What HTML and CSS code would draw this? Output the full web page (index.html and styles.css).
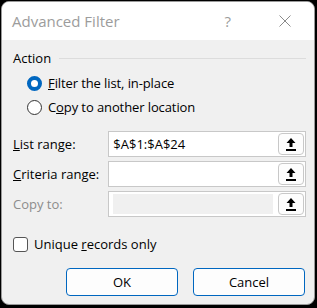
FILE: index.html
```html
<!DOCTYPE html>
<html lang="en">
<head>
    <meta charset="UTF-8">
    <title>Advanced Filter</title>
    <link rel="stylesheet" href="styles.css">
</head>
<body>
    <div class="dialog">
        <div class="titleBar">
            <span class="title">Advanced Filter</span>
            <span class="help">?</span>
            <span class="close">
                <svg width="12" height="12" viewBox="0 0 12 12">
                    <path d="M0.5 0.5L11.5 11.5M11.5 0.5L0.5 11.5" stroke="#8a8a8a" stroke-width="1" fill="none"/>
                </svg>
            </span>
        </div>
        <div class="content">
            <div class="groupHead">
                <span>Action</span>
                <div class="groupLine"></div>
            </div>
            <div class="radioList">
                <div class="radioRow">
                    <span class="radio checked"></span>
                    <span><u>F</u>ilter the list, in-place</span>
                </div>
                <div class="radioRow">
                    <span class="radio"></span>
                    <span>C<u>o</u>py to another location</span>
                </div>
            </div>
            <div class="fields">
                <div class="fieldRow">
                    <span class="fieldLabel"><u>L</u>ist range:</span>
                    <div class="rangeBox">
                        <span class="rangeText">$A$1:$A$24</span>
                        <span class="pickBtn"><svg width="10" height="13" viewBox="0 0 10 13"><path d="M5 0L9.5 5H6.5V9H3.5V5H0.5Z" fill="#000"/><rect x="0" y="11" width="10" height="2" fill="#000"/></svg></span>
                    </div>
                </div>
                <div class="fieldRow">
                    <span class="fieldLabel"><u>C</u>riteria range:</span>
                    <div class="rangeBox">
                        <span class="rangeText"></span>
                        <span class="pickBtn"><svg width="10" height="13" viewBox="0 0 10 13"><path d="M5 0L9.5 5H6.5V9H3.5V5H0.5Z" fill="#000"/><rect x="0" y="11" width="10" height="2" fill="#000"/></svg></span>
                    </div>
                </div>
                <div class="fieldRow">
                    <span class="fieldLabel disabled">Copy to:</span>
                    <div class="rangeBox">
                        <span class="rangeText off"></span>
                        <span class="pickBtn"><svg width="10" height="13" viewBox="0 0 10 13"><path d="M5 0L9.5 5H6.5V9H3.5V5H0.5Z" fill="#000"/><rect x="0" y="11" width="10" height="2" fill="#000"/></svg></span>
                    </div>
                </div>
            </div>
            <div class="checkRow">
                <span class="checkbox"></span>
                <span>Unique <u>r</u>ecords only</span>
            </div>
            <div class="buttons">
                <div class="btn">OK</div>
                <div class="btn">Cancel</div>
            </div>
        </div>
    </div>
</body>
</html>
```

FILE: styles.css
```css
*{
    margin:0;
    padding:0;
    box-sizing:border-box;
}

body{
    background:#000;
    font-family:"Open Sans","Noto Sans",sans-serif;
    font-size:13px;
    color:#000;
}

.dialog{
    width:314px;
    height:304px;
    margin:1px 0 0 1px;
    border-radius:8px;
    background:#f0f0f0;
    border:1px solid #9a9a9a;
    overflow:hidden;
    display:flex;
    flex-direction:column;
}

.titleBar{
    height:38px;
    background:#fff;
    display:flex;
    align-items:center;
    padding-left:10px;
}

.title{
    font-size:15px;
    color:#9c9c9c;
    flex:1;
}

.help{
    font-size:15px;
    color:#9c9c9c;
    margin-right:48px;
}

.close{
    display:flex;
    margin-right:23px;
}

.content{
    flex:1;
    padding:8px 8px 0 11px;
    display:flex;
    flex-direction:column;
}

.groupHead{
    display:flex;
    align-items:center;
    height:20px;
}

.groupLine{
    flex:1;
    height:1px;
    background:#dcdcdc;
    margin-left:8px;
}

.radioList{
    display:flex;
    flex-direction:column;
    gap:6px;
    padding:6px 0 0 14px;
}

.radioRow{
    display:flex;
    align-items:center;
    gap:6px;
    height:18px;
    letter-spacing:-0.1px;
}

.radio{
    width:15px;
    height:15px;
    border-radius:50%;
    border:1px solid #333;
    background:#fff;
}

.radio.checked{
    border:4px solid #0067c0;
}

.fields{
    display:flex;
    flex-direction:column;
    gap:4px;
    margin-top:15px;
}

.fieldRow{
    display:flex;
    align-items:center;
}

.fieldLabel{
    width:96px;
}

.disabled{
    color:#8c8c8c;
}

.rangeBox{
    width:199px;
    height:26px;
    border:1px solid #c8c8c8;
    background:#fff;
    display:flex;
    align-items:center;
    padding:0 1px 0 4px;
}

.rangeText{
    flex:1;
    height:20px;
    line-height:20px;
}

.rangeText.off{
    background:#f0f0f0;
    margin-right:5px;
}

.pickBtn{
    width:26px;
    height:22px;
    border:1px solid #c8c8c8;
    border-radius:4px;
    background:#fdfdfd;
    display:flex;
    align-items:center;
    justify-content:center;
}

.checkRow{
    display:flex;
    align-items:center;
    gap:6px;
    margin-top:18px;
}

.checkbox{
    width:15px;
    height:15px;
    border:1px solid #555;
    border-radius:3px;
    background:#fff;
}

.buttons{
    display:flex;
    justify-content:flex-end;
    gap:15px;
    margin-top:15px;
    padding-right:1px;
}

.btn{
    width:112px;
    height:28px;
    border:1px solid #0067c0;
    border-radius:4px;
    background:#fdfdfd;
    display:flex;
    align-items:center;
    justify-content:center;
}
```
